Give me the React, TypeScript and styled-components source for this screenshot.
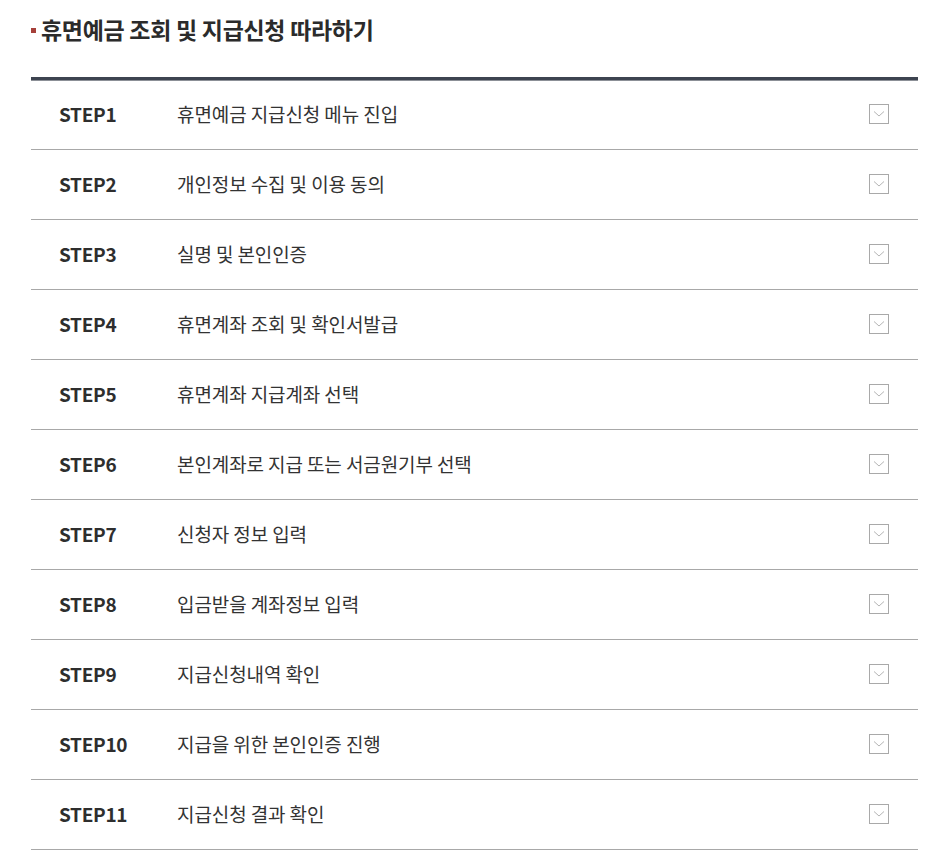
import styled, { createGlobalStyle } from "styled-components";

const GlobalStyle = createGlobalStyle`
  body {
    margin: 0;
    background: #fff;
    font-family: "Noto Sans CJK KR", "Noto Sans", sans-serif;
  }
`;

const Page = styled.div`
  padding: 12px 8px 0 31px;
  width: 887px;
`;

const Title = styled.h2`
  display: flex;
  align-items: center;
  gap: 5px;
  margin: 0 0 31px;
  font-size: 23px;
  font-weight: 700;
  color: #2b2b2b;
  letter-spacing: -0.3px;
  line-height: 34px;

  &::before {
    content: "";
    width: 5px;
    height: 5px;
    margin-top: 3px;
    background: #a6403a;
  }
`;

const List = styled.ul`
  list-style: none;
  margin: 0;
  padding: 0;
  border-top: 3px solid #3d4450;
  box-shadow: inset 0 1px 0 #8c9097;
`;

const Row = styled.li`
  display: flex;
  align-items: center;
  height: 70px;
  border-bottom: 1px solid #a8a8a8;
  box-sizing: border-box;
  padding: 0 29px 2px 28px;
`;

const Step = styled.span`
  width: 118px;
  font-size: 19px;
  font-weight: 700;
  color: #2e2e2e;
  letter-spacing: -0.3px;
`;

const Label = styled.span`
  flex: 1;
  font-size: 19px;
  color: #333;
  letter-spacing: -0.1px;
`;

const Toggle = styled.span`
  width: 20px;
  height: 20px;
  box-sizing: border-box;
  border: 1px solid #a9a9a9;
  display: flex;
  align-items: center;
  justify-content: center;
`;

const steps = [
  "휴면예금 지급신청 메뉴 진입",
  "개인정보 수집 및 이용 동의",
  "실명 및 본인인증",
  "휴면계좌 조회 및 확인서발급",
  "휴면계좌 지급계좌 선택",
  "본인계좌로 지급 또는 서금원기부 선택",
  "신청자 정보 입력",
  "입금받을 계좌정보 입력",
  "지급신청내역 확인",
  "지급을 위한 본인인증 진행",
  "지급신청 결과 확인",
];

const App = () => (
  <Page>
    <GlobalStyle />
    <Title>휴면예금 조회 및 지급신청 따라하기</Title>
    <List>
      {steps.map((s, i) => (
        <Row key={s}>
          <Step>STEP{i + 1}</Step>
          <Label>{s}</Label>
          <Toggle>
            <svg width="12" height="8" viewBox="0 0 12 8">
              <path d="M1 1.5 L6 6 L11 1.5" fill="none" stroke="#b5b5b5" strokeWidth="1" />
            </svg>
          </Toggle>
        </Row>
      ))}
    </List>
  </Page>
);

export default App;
